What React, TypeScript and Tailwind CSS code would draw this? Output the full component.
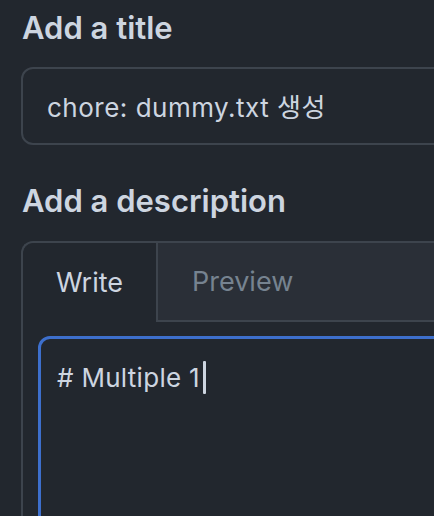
import React from "react";

const font = {
  fontFamily: 'Inter, "Noto Sans CJK KR", sans-serif',
};

const App = () => {
  return (
    <div
      className="w-[434px] h-[516px] overflow-hidden bg-[#22272e] text-[#cdd9e5]"
      style={font}
    >
      <div className="w-[640px] pl-[21px] pt-[9px]">
        <h2 className="text-[31px] leading-[38px] font-semibold pl-[1px] text-[#cdd5e0]">
          Add a title
        </h2>

        <div className="mt-[20px] h-[78px] rounded-[12px] border-2 border-[#3d444d] bg-[#22272e] flex items-center pl-[24px]">
          <span className="text-[26px] tracking-[0.5px] pt-[2px] text-[#cdd5e0]">
            chore: dummy.txt 생성
          </span>
        </div>

        <h2 className="mt-[37px] text-[31px] leading-[38px] font-semibold pl-[1px] text-[#cdd5e0]">
          Add a description
        </h2>

        <div className="mt-[21px] border-l-2 border-t-2 border-[#3d444d] rounded-tl-[12px] h-[300px]">
          <div className="flex h-[79px] bg-[#2a2f37] rounded-tl-[12px]">
            <div className="w-[135px] bg-[#22272e] border-r-2 border-[#3d444d] rounded-tl-[12px] flex items-center justify-center pt-[2px] text-[27px] text-[#cdd5e0]">
              Write
            </div>
            <div className="flex-1 flex items-center border-b-2 border-[#3d444d] pl-[34px] pt-[2px] text-[27px] text-[#768390]">
              Preview
            </div>
          </div>
          <div className="pl-[15px] pt-[14px]">
            <div className="h-[200px] border-[3px] border-[#3d6fcc] rounded-[12px] pl-[16px] pt-[19px]">
              <div className="flex items-center text-[26px] tracking-[0.3px] text-[#cdd5e0]">
                <span># Multiple 1</span>
                <span className="ml-[3px] w-[3px] h-[33px] bg-[#cdd5e0] rounded-[1px]" />
              </div>
            </div>
          </div>
        </div>
      </div>
    </div>
  );
};

export default App;
